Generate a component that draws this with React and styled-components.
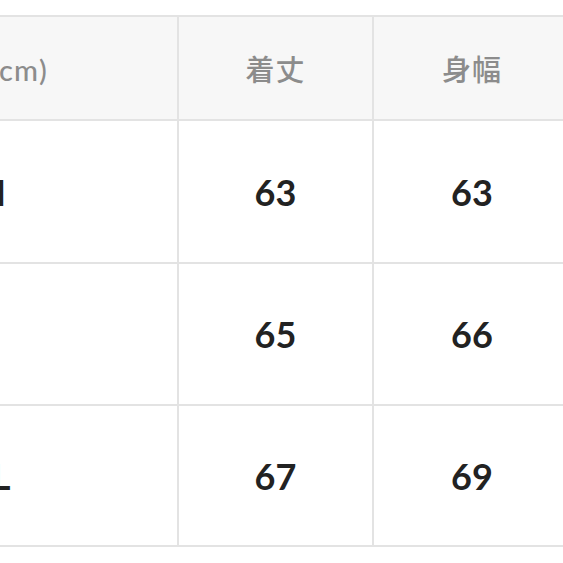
import React from "react";
import styled, { createGlobalStyle } from "styled-components";

const GlobalStyle = createGlobalStyle`
  html, body {
    margin: 0;
    padding: 0;
    background: #ffffff;
    overflow: hidden;
  }
  body {
    font-family: Lato, "Noto Sans CJK JP", sans-serif;
  }
`;

const rows = [
  { size: "M", length: 63, width: 63 },
  { size: "L", length: 65, width: 66 },
  { size: "XL", length: 67, width: 69 },
];

const Page = styled.div`
  width: 563px;
  height: 563px;
  overflow: hidden;
  padding-top: 15px;
  box-sizing: border-box;
`;

const Table = styled.div`
  display: grid;
  grid-template-columns: 376px 193px 196px;
  grid-template-rows: 102px 141px 140px 139px;
  gap: 2px;
  padding: 2px 0;
  width: max-content;
  margin-left: -199px;
  background: #e3e3e3;
`;

const Cell = styled.div`
  display: flex;
  align-items: center;
  justify-content: center;
  background: ${(p) => (p.head ? "#f7f7f7" : "#ffffff")};
  color: ${(p) => (p.head ? "#8c8c8c" : "#222222")};
  font-family: Lato, "Noto Sans CJK JP", sans-serif;
  font-size: ${(p) => (p.head ? "29px" : "36px")};
  font-weight: ${(p) => (p.head ? 500 : 700)};
  letter-spacing: ${(p) => (p.head ? "1px" : "0")};
  padding-top: ${(p) => (p.head ? "0" : "0")};
`;

export default function App() {
  return (
    <Page>
      <GlobalStyle />
      <Table>
        <Cell head>単位(cm)</Cell>
        <Cell head>着丈</Cell>
        <Cell head>身幅</Cell>
        {rows.map((r) => (
          <React.Fragment key={r.size}>
            <Cell>{r.size}</Cell>
            <Cell>{r.length}</Cell>
            <Cell>{r.width}</Cell>
          </React.Fragment>
        ))}
      </Table>
    </Page>
  );
}
